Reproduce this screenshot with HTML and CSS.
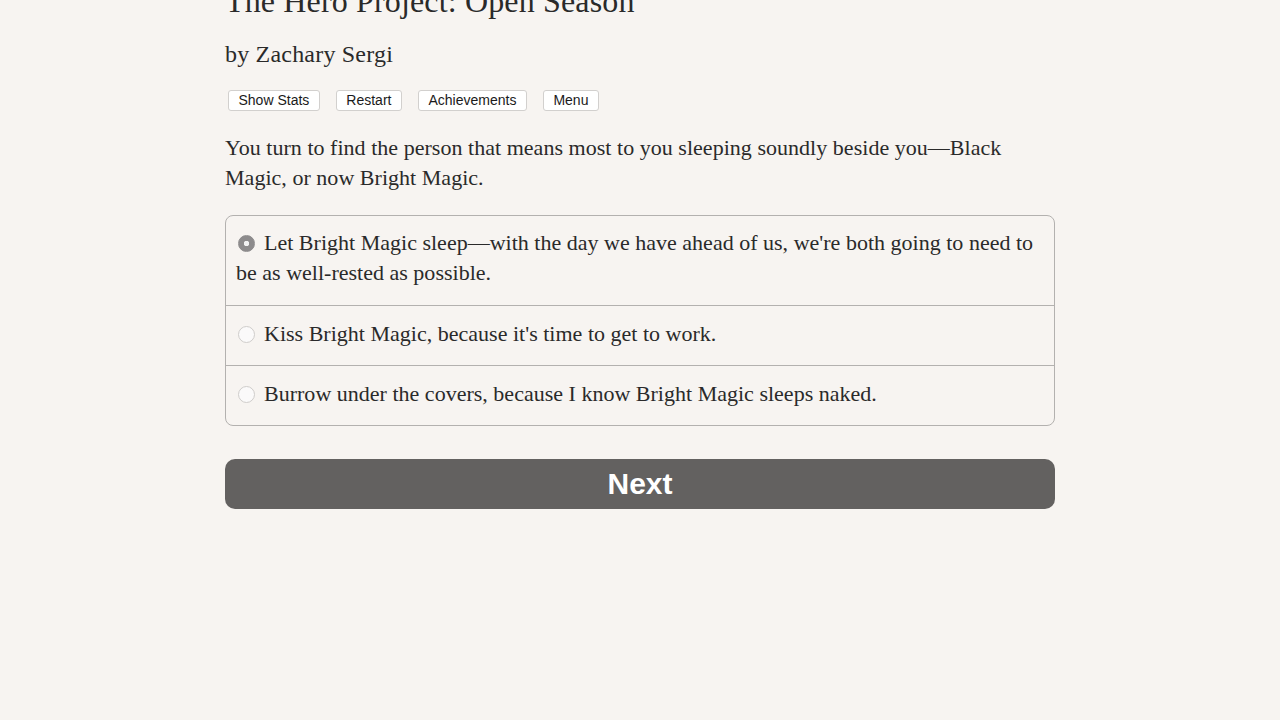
FILE: index.html
```html
<!DOCTYPE html>
<html lang="en">
<head>
<meta charset="utf-8">
<title>The Hero Project: Open Season</title>
<link rel="stylesheet" href="styles.css">
</head>
<body>
<main class="page">
  <h1 class="title">The Hero Project: Open Season</h1>
  <h2 class="author">by Zachary Sergi</h2>
  <nav class="toolbar">
    <button class="tool">Show Stats</button>
    <button class="tool">Restart</button>
    <button class="tool">Achievements</button>
    <button class="tool">Menu</button>
  </nav>
  <p class="story">You turn to find the person that means most to you sleeping soundly beside you—Black Magic, or now Bright Magic.</p>
  <form class="choices">
    <label class="choice"><span class="radio checked"></span>Let Bright Magic sleep—with the day we have ahead of us, we're both going to need to be as well-rested as possible.</label>
    <label class="choice"><span class="radio"></span>Kiss Bright Magic, because it's time to get to work.</label>
    <label class="choice"><span class="radio"></span>Burrow under the covers, because I know Bright Magic sleeps naked.</label>
  </form>
  <button class="next">Next</button>
</main>
</body>
</html>
```

FILE: styles.css
```css
html, body {
  margin: 0;
  padding: 0;
  background: #f7f4f1;
}
body {
  font-family: "Liberation Serif", "DejaVu Serif", serif;
  color: #2a2a2a;
}
.page {
  width: 830px;
  margin: 0 auto;
  display: flex;
  flex-direction: column;
}
.title {
  font-weight: normal;
  font-size: 32px;
  line-height: 40px;
  margin: -19px 0 0 0;
  letter-spacing: 0.15px;
}
.author {
  font-weight: normal;
  font-size: 24px;
  line-height: 32px;
  margin: 17px 0 0 0;
  letter-spacing: 0.2px;
}
.toolbar {
  display: flex;
  gap: 16px;
  margin: 20px 0 0 3px;
}
.tool {
  font-family: "Liberation Sans", Arial, sans-serif;
  font-size: 14px;
  color: #1a1a1a;
  background: #fff;
  border: 1px solid #d2d0ce;
  border-radius: 3px;
  height: 21px;
  padding: 0 9.5px;
  line-height: 19px;
}
.story {
  font-size: 22px;
  line-height: 30px;
  margin: 22px 0 0 0;
  letter-spacing: 0.03px;
}
.choices {
  margin-top: 22px;
  border: 1px solid #b3b1af;
  border-radius: 8px;
  display: flex;
  flex-direction: column;
}
.choice {
  font-size: 22px;
  line-height: 30px;
  letter-spacing: 0.01px;
  padding: 13px 10px 16px 10px;
  border-top: 1px solid #b3b1af;
}
.choice:first-child {
  border-top: none;
  padding-top: 12px;
  padding-bottom: 17px;
}
.radio {
  display: inline-block;
  width: 17px;
  height: 17px;
  border: 1px solid #cfcdcb;
  border-radius: 50%;
  background: #fbfafa;
  box-sizing: border-box;
  margin: 0 9px 0 2px;
  vertical-align: -2px;
}
.radio.checked {
  background: radial-gradient(circle, #f2f2f2 0 2.5px, #8d8b8c 3px);
  border-color: #8d8b8c;
}
.next {
  margin-top: 33px;
  height: 50px;
  border: none;
  border-radius: 10px;
  background: #636160;
  color: #fff;
  font-family: "Liberation Sans", Arial, sans-serif;
  font-weight: bold;
  font-size: 30px;
}
```
